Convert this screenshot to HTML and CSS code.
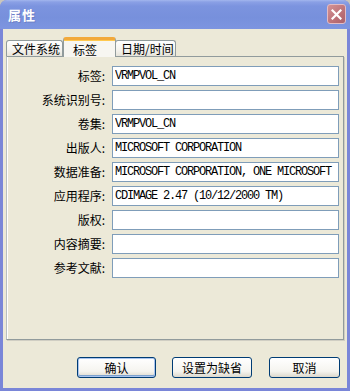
FILE: index.html
```html
<!DOCTYPE html>
<html lang="zh-CN">
<head>
  <meta charset="UTF-8">
  <title>属性</title>
  <link rel="stylesheet" href="styles.css">
</head>
<body>
  <div class="window">
    <div class="titlebar">
      <span class="title">属性</span>
      <span class="close">
        <svg width="11" height="11" viewBox="0 0 11 11"><path d="M1.5 1.5 L9.5 9.5 M9.5 1.5 L1.5 9.5" stroke="#fff" stroke-width="2.2" stroke-linecap="square"/></svg>
      </span>
    </div>
    <div class="client">
      <div class="tabs">
        <div class="tab">文件系统</div>
        <div class="tab active">标签</div>
        <div class="tab">日期/时间</div>
      </div>
      <div class="panel">
        <div class="form">
          <label>标签:</label><input type="text" value="VRMPVOL_CN" readonly>
          <label>系统识别号:</label><input type="text" value="" readonly>
          <label>卷集:</label><input type="text" value="VRMPVOL_CN" readonly>
          <label>出版人:</label><input type="text" value="MICROSOFT CORPORATION" readonly>
          <label>数据准备:</label><input type="text" value="MICROSOFT CORPORATION, ONE MICROSOFT" readonly>
          <label>应用程序:</label><input type="text" value="CDIMAGE 2.47 (10/12/2000 TM)" readonly>
          <label>版权:</label><input type="text" value="" readonly>
          <label>内容摘要:</label><input type="text" value="" readonly>
          <label>参考文献:</label><input type="text" value="" readonly>
        </div>
      </div>
      <div class="buttons">
        <button type="button" class="btn default ok">确认</button>
        <button type="button" class="btn reset">设置为缺省</button>
        <button type="button" class="btn cancel">取消</button>
      </div>
    </div>
  </div>
</body>
</html>
```

FILE: styles.css
```css
body { margin: 0; background: #c9c6bd; font-family: "Noto Sans CJK SC", "Noto Sans", sans-serif; font-size: 12px; color: #000; }
.window { width: 350px; height: 391px; box-sizing: border-box; padding: 0 3px 3px; background: #7a86d8; border-radius: 7px 7px 0 0; display: flex; flex-direction: column; }
.titlebar { height: 29px; margin: 0 -3px; padding: 0 4px 0 8px; display: flex; align-items: center; justify-content: space-between; border-radius: 7px 7px 0 0; background: linear-gradient(#a3b6ee 0, #8aa0e5 2px, #7c94df 6px, #7790dc 60%, #7d95e0 100%); }
.title { color: #fff; font-weight: bold; font-size: 13px; letter-spacing: 1px; text-shadow: 1px 1px 0 #6d7fc6; margin-top: -1px; }
.close { width: 19px; height: 20px; box-sizing: border-box; border: 1px solid #e3bcc4; border-radius: 3px; background: linear-gradient(135deg, #d49396, #b86c73 70%, #a9636c); display: flex; align-items: center; justify-content: center; margin-top: -1px; }
.client { flex: 1; background: #ece9d8; padding: 7px 3px 0 3px; display: flex; flex-direction: column; }
.tabs { display: flex; align-items: flex-end; height: 20px; position: relative; z-index: 1; }
.tab { height: 16px; box-sizing: border-box; padding: 0 5px; border: 1px solid #919b9c; border-bottom: none; border-radius: 3px 3px 0 0; background: linear-gradient(#fefefe, #f4f3ee 60%, #e6e4da); line-height: 15px; white-space: nowrap; }
.tab:first-child { width: 57px; }
.tab:last-child { width: 61px; }
.tab.active { height: 20px; width: 53px; margin: 0 -1px 0 0; padding-top: 2px; padding-left: 9px; border-top: 3px solid #f2a93b; background: #f7f6f1; line-height: 15px; box-shadow: inset 0 1px 0 #ffc94f; border-radius: 3px 3px 0 0; margin-bottom: -1px; }
.panel { height: 284px; box-sizing: border-box; border: 1px solid #919b9c; border-left-color: #b8bfc0; box-shadow: inset 1px 0 0 #fff, 1px 1px 0 #d0cec3; background: #ece9d8; padding-top: 9px; margin-right: 0; }
.form { display: grid; grid-template-columns: 98px 227px; column-gap: 7px; row-gap: 4px; }
.form label { height: 20px; line-height: 20px; text-align: right; white-space: nowrap; }
.form input { height: 20px; box-sizing: border-box; margin: 0; padding: 0 2px; border: 1px solid #7f9db9; background: #fff; font-family: "Liberation Mono", monospace; font-size: 12px; letter-spacing: -1.2px; color: #000; outline: none; }
.buttons { display: flex; justify-content: flex-end; margin-top: 17px; padding-right: 4px; }
.btn { height: 21px; box-sizing: border-box; padding: 0; border: 1px solid #003c74; border-radius: 3px; background: linear-gradient(#ffffff, #f5f4ef 70%, #dcd8cc); font-family: "Noto Sans CJK SC", sans-serif; font-size: 12px; line-height: 17px; color: #000; }
.btn.ok { width: 79px; }
.btn.reset { width: 80px; margin-left: 16px; }
.btn.cancel { width: 71px; margin-left: 17px; }
.btn.default { box-shadow: inset 0 0 0 1px #a9c4ef, inset 0 -1px 0 1px #7da2ce; }
```
